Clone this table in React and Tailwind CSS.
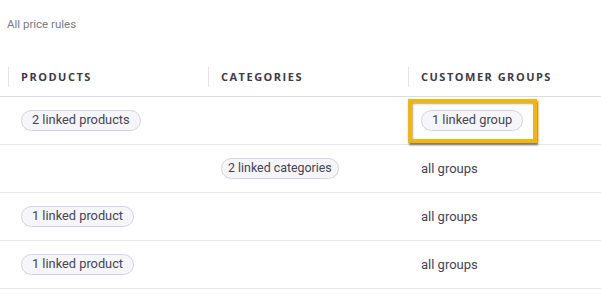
import React from 'react';

const Pill = ({ children, tight }) => (
    <span className={`inline-flex items-center h-[21px] rounded-full border border-[#d2d2de] bg-[#f6f6fa] text-[#444454] leading-none whitespace-nowrap ${tight ? 'px-[6px] text-[12.4px]' : 'px-[10px] text-[12.8px]'}`}>
        {children}
    </span>
);

const rows = [
    { products: '2 linked products', categories: null, groups: 'highlight' },
    { products: null, categories: '2 linked categories', groups: 'all groups' },
    { products: '1 linked product', categories: null, groups: 'all groups' },
    { products: '1 linked product', categories: null, groups: 'all groups' },
];

const App = () => {
    return (
        <div className="w-[601px] h-[294px] bg-white overflow-hidden" style={{ fontFamily: 'Roboto, "Liberation Sans", sans-serif' }}>
            <div className="h-[58px] pt-[16px] pl-[7px] text-[11.5px] leading-[16px] text-[#7a7a86]">All price rules</div>

            <div className="flex items-center h-[39px] pl-2 border-b border-[#dcdce4]" style={{ fontFamily: '"Open Sans", sans-serif' }}>
                {['Products', 'Categories', 'Customer groups'].map((h, i) => (
                    <div key={h} className={`flex items-center h-[20px] border-l border-[#e2e2e8] pl-[12px] ${i < 2 ? 'w-[200px]' : 'flex-1'}`}>
                        <span className="text-[11px] font-bold uppercase tracking-[1.5px] text-[#3b3b4b]">{h}</span>
                    </div>
                ))}
            </div>

            {rows.map((r, idx) => (
                <div key={idx} className="flex items-center h-[48px] pl-2 border-b border-[#e6e6ec] text-[13px] text-[#444454]">
                    <div className="w-[200px] pl-[13px]">{r.products && <Pill>{r.products}</Pill>}</div>
                    <div className="w-[200px] pl-[13px]">{r.categories && <Pill tight>{r.categories}</Pill>}</div>
                    <div className="flex-1 pl-[13px]">
                        {r.groups === 'highlight' ? (
                            <div className="relative inline-block">
                                <Pill>1 linked group</Pill>
                                <div className="absolute left-[-13px] top-[-11px] w-[129px] h-[44px] border-[4px] border-[#f6b500] shadow-[1px_2px_2px_rgba(0,0,0,0.55),inset_1px_1px_2px_rgba(0,0,0,0.35)]" />
                            </div>
                        ) : (
                            <span>{r.groups}</span>
                        )}
                    </div>
                </div>
            ))}
        </div>
    );
};

export default App;
